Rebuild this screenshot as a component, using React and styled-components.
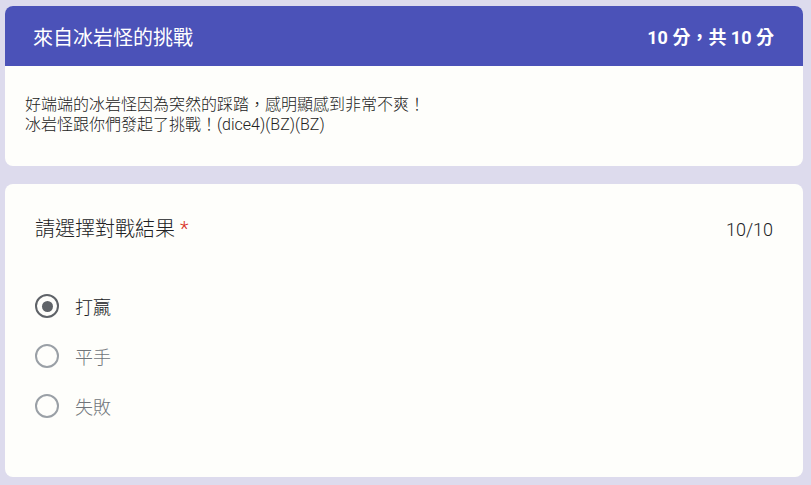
import React, { useState } from "react";
import styled, { createGlobalStyle } from "styled-components";

const GlobalStyle = createGlobalStyle`
  html, body {
    margin: 0;
    padding: 0;
    background: #dddbed;
    font-family: Roboto, "Noto Sans CJK TC", "Noto Sans", sans-serif;
  }
`;

const Page = styled.div`
  padding: 6px 8px 8px 5px;
  display: flex;
  flex-direction: column;
  gap: 18px;
`;

const Card = styled.div`
  background: #fefefb;
  border-radius: 8px;
  overflow: hidden;
  height: ${({ h }) => h}px;
  box-sizing: border-box;
`;

const Header = styled.div`
  height: 60px;
  background: #4b52b8;
  color: #fff;
  display: flex;
  align-items: center;
  justify-content: space-between;
  padding: 0 29px 0 28px;
`;

const Title = styled.div`
  font-size: 20px;
  font-weight: 400;
`;

const Score = styled.div`
  font-size: 18px;
  font-weight: 700;
`;

const Description = styled.div`
  padding: 29px 21px 29px 20px;
  font-size: 16px;
  font-weight: 300;
  line-height: 20px;
  color: #222;
`;

const Question = styled.div`
  padding: 29px 30px 0 30px;
`;

const QuestionHead = styled.div`
  display: flex;
  justify-content: space-between;
  align-items: center;
  font-size: 20px;
  font-weight: 300;
  color: #202124;
`;

const Required = styled.span`
  color: #d93025;
  margin-left: 5px;
`;

const Points = styled.span`
  font-size: 18px;
  color: #202124;
  margin-top: 4px;
`;

const Options = styled.div`
  margin-top: 52px;
  display: flex;
  flex-direction: column;
  gap: 26px;
`;

const Option = styled.label`
  display: flex;
  align-items: center;
  gap: 16px;
  height: 24px;
  font-size: 18px;
  font-weight: 300;
  color: ${({ checked }) => (checked ? "#202124" : "#70757a")};
  cursor: pointer;
`;

const Radio = styled.span`
  width: 20px;
  height: 20px;
  flex: none;
  border-radius: 50%;
  border: 2px solid ${({ checked }) => (checked ? "#5f6368" : "#9aa0a6")};
  display: flex;
  align-items: center;
  justify-content: center;
  &::after {
    content: "";
    width: 11px;
    height: 11px;
    border-radius: 50%;
    background: #5f6368;
    display: ${({ checked }) => (checked ? "block" : "none")};
  }
`;

const options = ["打贏", "平手", "失敗"];

export default function App() {
  const [picked, setPicked] = useState(0);

  return (
    <Page>
      <GlobalStyle />
      <Card h={160}>
        <Header>
          <Title>來自冰岩怪的挑戰</Title>
          <Score>10 分，共 10 分</Score>
        </Header>
        <Description>
          好端端的冰岩怪因為突然的踩踏，感明顯感到非常不爽！
          <br />
          冰岩怪跟你們發起了挑戰！(dice4)(BZ)(BZ)
        </Description>
      </Card>
      <Card h={293}>
        <Question>
          <QuestionHead>
            <span>
              請選擇對戰結果<Required>*</Required>
            </span>
            <Points>10/10</Points>
          </QuestionHead>
          <Options>
            {options.map((o, i) => (
              <Option key={o} checked={picked === i} onClick={() => setPicked(i)}>
                <Radio checked={picked === i} />
                {o}
              </Option>
            ))}
          </Options>
        </Question>
      </Card>
    </Page>
  );
}
